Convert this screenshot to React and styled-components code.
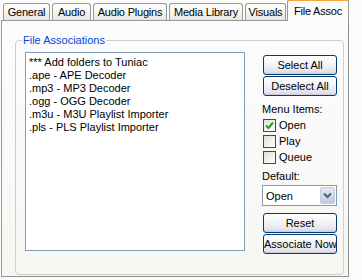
import React from "react"
import styled, { createGlobalStyle } from "styled-components"

const GlobalStyle = createGlobalStyle`
  html, body {
    margin: 0;
    padding: 0;
    background: #fbfbfa;
  }
  body {
    font-family: "Liberation Sans", Arial, sans-serif;
    font-size: 11px;
    color: #000;
  }
`

const Window = styled.div`
  width: 362px;
  height: 280px;
  padding-left: 1px;
  box-sizing: border-box;
  overflow: hidden;
`

const TabStrip = styled.div`
  display: flex;
  align-items: flex-end;
  height: 20px;
  padding-left: 2px;
  gap: 2px;
  position: relative;
  z-index: 1;
`

const Tab = styled.div`
  flex: none;
  width: ${(p) => p.$w}px;
  height: ${(p) => (p.$active ? 22 : 17)}px;
  margin: ${(p) => (p.$active ? "0 -2px -1px -1px" : "0")};
  box-sizing: border-box;
  display: flex;
  align-items: center;
  justify-content: center;
  white-space: nowrap;
  letter-spacing: -0.2px;
  line-height: 13px;
  border: 1px solid #919b9c;
  border-bottom: none;
  border-radius: 3px 3px 0 0;
  background: ${(p) =>
    p.$active
      ? "#fcfcfe"
      : "linear-gradient(#ffffff, #f3f3ef 60%, #e6e5de)"};
  border-top: ${(p) => (p.$active ? "2px solid #f5a73a" : "1px solid #919b9c")};
  padding-top: ${(p) => (p.$active ? 0 : 1)}px;
`

const Panel = styled.div`
  width: 348px;
  height: 257px;
  box-sizing: border-box;
  border: 1px solid #919b9c;
  border-right-color: #8a9294;
  border-bottom-color: #8a9294;
  background: linear-gradient(#fcfcfe, #f6f6f2);
  padding: 13px 0 0 13px;
`

const Group = styled.fieldset`
  width: 327px;
  margin: 0;
  padding: 0;
  box-sizing: border-box;
  border: 1px solid #d0d0bf;
  border-radius: 4px;
`

const Legend = styled.legend`
  margin-left: 6px;
  padding: 0 1px;
  line-height: 13px;
  color: #0046d5;
`

const Body = styled.div`
  display: flex;
  align-items: flex-start;
  gap: 17px;
  padding: 5px 6px 20px 9px;
`

const List = styled.div`
  width: 220px;
  height: 199px;
  box-sizing: border-box;
  border: 1px solid #7f9db9;
  background: #fff;
  padding: 3px 3px;
`

const Item = styled.div`
  line-height: 13px;
  white-space: nowrap;
`

const Side = styled.div`
  width: 75px;
  margin-top: 3px;
  display: flex;
  flex-direction: column;
`

const Button = styled.button`
  width: 74px;
  height: 20px;
  margin: ${(p) => p.$mt || 0}px 0 0 1px;
  padding: 0;
  box-sizing: border-box;
  font: inherit;
  color: #000;
  border: 1px solid #003c74;
  border-radius: 3px;
  background: linear-gradient(#ffffff, #f4f4f8 45%, #e6e6ee 80%, #d6d3e2);
  box-shadow: inset 0 -1px 0 #cfcfe0;
  white-space: nowrap;
`

const Label = styled.div`
  line-height: 13px;
  margin-top: ${(p) => p.$mt || 0}px;
`

const CheckRow = styled.label`
  display: flex;
  align-items: center;
  gap: 3px;
  height: 13px;
  line-height: 13px;
  margin-top: ${(p) => p.$mt || 0}px;
  padding-left: 1px;
`

const Box = styled.span`
  width: 13px;
  height: 13px;
  box-sizing: border-box;
  border: 1px solid #1c5180;
  background: linear-gradient(135deg, #e0e0da, #ffffff);
  display: flex;
  align-items: center;
  justify-content: center;
`

const Select = styled.div`
  width: 75px;
  height: 21px;
  margin-top: 2px;
  box-sizing: border-box;
  border: 1px solid #7f9db9;
  background: #fff;
  display: flex;
  align-items: center;
  padding: 1px;
`

const SelectText = styled.span`
  flex: 1;
  padding-left: 2px;
`

const Arrow = styled.span`
  width: 15px;
  height: 17px;
  box-sizing: border-box;
  border: 1px solid #c3cbe0;
  border-radius: 2px;
  background: linear-gradient(#e4e8f2, #c2c9dc);
  display: flex;
  align-items: center;
  justify-content: center;
`

const items = [
  "*** Add folders to Tuniac",
  ".ape - APE Decoder",
  ".mp3 - MP3 Decoder",
  ".ogg - OGG Decoder",
  ".m3u - M3U Playlist Importer",
  ".pls - PLS Playlist Importer",
]

const tabs = [
  { label: "General", w: 47 },
  { label: "Audio", w: 39 },
  { label: "Audio Plugins", w: 74 },
  { label: "Media Library", w: 74 },
  { label: "Visuals", w: 41 },
  { label: "File Assoc", w: 62, active: true },
]

const Check = ({ checked, children, mt }) => (
  <CheckRow $mt={mt}>
    <Box>
      {checked && (
        <svg width="9" height="9" viewBox="0 0 9 9">
          <path d="M1 4.5 L3.5 7 L8 1.5" fill="none" stroke="#21a121" strokeWidth="2" />
        </svg>
      )}
    </Box>
    {children}
  </CheckRow>
)

export default function App() {
  return (
    <Window>
      <GlobalStyle />
      <TabStrip>
        {tabs.map((t) => (
          <Tab key={t.label} $w={t.w} $active={t.active}>
            {t.label}
          </Tab>
        ))}
      </TabStrip>
      <Panel>
        <Group>
          <Legend>File Associations</Legend>
          <Body>
            <List>
              {items.map((i) => (
                <Item key={i}>{i}</Item>
              ))}
            </List>
            <Side>
              <Button>Select All</Button>
              <Button $mt={1}>Deselect All</Button>
              <Label $mt={7}>Menu Items:</Label>
              <Check checked mt={3}>Open</Check>
              <Check mt={3}>Play</Check>
              <Check mt={3}>Queue</Check>
              <Label $mt={6}>Default:</Label>
              <Select>
                <SelectText>Open</SelectText>
                <Arrow>
                  <svg width="9" height="7" viewBox="0 0 9 7">
                    <path d="M1 1.5 L4.5 5 L8 1.5" fill="none" stroke="#4d6185" strokeWidth="2" />
                  </svg>
                </Arrow>
              </Select>
              <Button $mt={7}>Reset</Button>
              <Button $mt={1}>Associate Now</Button>
            </Side>
          </Body>
        </Group>
      </Panel>
    </Window>
  )
}
